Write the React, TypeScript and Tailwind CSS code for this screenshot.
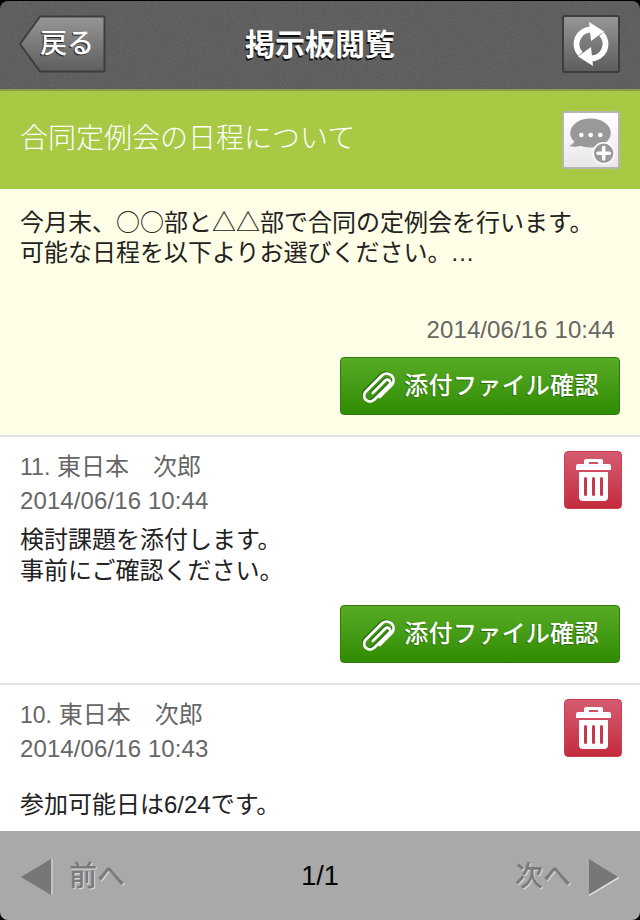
import React from 'react';

const font = { fontFamily: '"Liberation Sans", "Noto Sans CJK JP", sans-serif' };
const cjk = { fontFamily: '"Noto Sans CJK JP", sans-serif' };

function AttachButton() {
  return (
    <button className="w-[280px] h-[58px] rounded-[4px] border border-[#2f7a08] bg-gradient-to-b from-[#58ab24] to-[#2f8c00] flex items-center justify-center gap-[7px] text-white text-[24px] tracking-[0.3px] [text-shadow:-1px_1px_0_#2b6b10]">
      <svg width="36" height="36" viewBox="8.500 12 26 26" fill="none" stroke="#fff" strokeWidth="2" strokeLinecap="round" className="drop-shadow-[-1px_-1px_0_#2b6b10]">
        <path d="M17 30L26 21a2.100 2.100 0 0 1 3 3L18 35a4.200 4.200 0 0 1-6-6L24 17a5 5 0 0 1 7 7L22 33" />
      </svg>
      <span className="font-medium">添付ファイル確認</span>
    </button>
  );
}

function TrashButton() {
  return (
    <button className="w-[58px] h-[58px] rounded-[4px] bg-gradient-to-b from-[#d45a70] to-[#c52a3e] border border-[#c9404f] flex items-center justify-center shrink-0">
      <svg width="35" height="42" viewBox="0 0 35 42">
        <path fill="#fff" fillRule="evenodd" d="M10 0h15a2 2 0 0 1 2 2v3h6a2 2 0 0 1 2 2v4H0V7a2 2 0 0 1 2-2h6V2a2 2 0 0 1 2-2zm3 3v2h9V3z" />
        <path fill="#fff" d="M3 13h29v25a4 4 0 0 1-4 4H7a4 4 0 0 1-4-4z" />
        <rect x="8" y="18" width="3" height="19" rx="1.500" fill="#c9394e" />
        <rect x="16" y="18" width="3" height="19" rx="1.500" fill="#c9394e" />
        <rect x="24" y="18" width="3" height="19" rx="1.500" fill="#c9394e" />
      </svg>
    </button>
  );
}

function Reply({ no, date, lines, attach, gap }: { no: string; date: string; lines: string[]; attach?: boolean; gap: string }) {
  return (
    <div className="relative px-5 pt-[14px] pb-[20px] bg-white">
      <div className="absolute right-[18px] top-[14px]"><TrashButton /></div>
      <div className="text-[#666] text-[24px] leading-[32px] h-[32px]">
        <span className="text-[23px]">{no}</span> 東日本　次郎
      </div>
      <div className="text-[#666] text-[24px] tracking-[0.1px] leading-[36px] h-[36px]">{date}</div>
      <div className={`text-[#222] text-[24px] leading-[31px] ${gap}`}>
        {lines.map((l) => <div key={l}>{l}</div>)}
      </div>
      {attach && <div className="flex justify-end mt-[19px]"><AttachButton /></div>}
    </div>
  );
}

export default function App() {
  return (
    <div style={font} className="w-[640px] h-[920px] bg-black flex flex-col overflow-hidden">
      {/* header */}
      <div className="relative h-[90px] mt-px shrink-0 rounded-t-[8px] bg-[#565656] border-b-2 border-[#8d9a4a] flex items-center justify-between pl-[18px] pr-[20px] overflow-hidden">
        <svg className="absolute inset-0 w-full h-full opacity-20 pointer-events-none">
          <filter id="grain"><feTurbulence type="fractalNoise" baseFrequency="0.9" numOctaves="2" /><feColorMatrix type="saturate" values="0" /></filter>
          <rect width="100%" height="100%" filter="url(#grain)" />
        </svg>
        <div className="relative w-[88px] h-[58px] flex items-center justify-end pr-[12px] -mt-[2px] text-white text-[27px] font-medium [text-shadow:-1px_1px_0_#222]">
          <svg className="absolute inset-0" width="88" height="58" viewBox="0 0 88 58">
            <defs>
              <linearGradient id="backFill" x1="0" y1="0" x2="0" y2="1">
                <stop offset="0" stopColor="#969696" />
                <stop offset="1" stopColor="#5e5e5e" />
              </linearGradient>
            </defs>
            <path d="M22 1.500H85a1.500 1.500 0 0 1 1.500 1.500V55a1.500 1.500 0 0 1-1.500 1.500H22L2 29z" fill="url(#backFill)" stroke="#3d3d3d" strokeWidth="2" strokeLinejoin="round" />
          </svg>
          <span className="relative">戻る</span>
        </div>
        <div className="absolute left-0 right-0 text-center text-white font-bold text-[30px] [text-shadow:-1px_2px_0_#111] -mt-[2px]">掲示板閲覧</div>
        <div className="relative w-[58px] h-[58px] -mt-[2px] rounded-[3px] border-2 border-[#3d3d3d] bg-gradient-to-b from-[#969696] to-[#5e5e5e] flex items-center justify-center">
          <svg width="44" height="48" viewBox="-22 -24 44 48">
            <path fill="none" stroke="#fff" strokeWidth="6" d="M0 -14.500A14.500 14.500 0 0 0 -10.500 10" />
            <path fill="#fff" d="M-2 -22L13 -12.500 0 -3z" />
            <path fill="none" stroke="#fff" strokeWidth="6" d="M0 14.500A14.500 14.500 0 0 0 10.500 -10" />
            <path fill="#fff" d="M2 22L-13 12.500 0 3z" />
          </svg>
        </div>
      </div>

      {/* title */}
      <div className="h-[98px] shrink-0 bg-[#a8c944] flex items-center justify-between pl-5 pr-[20px] text-white text-[28px]">
        <span className="-mt-[2px] font-light">合同定例会の日程について</span>
        <div className="w-[58px] h-[58px] rounded-[3px] border-2 border-[#b5b5b5] bg-gradient-to-b from-white to-[#e8e8e8]">
          <svg width="54" height="54" viewBox="2 2 54 54">
            <ellipse cx="28.500" cy="22" rx="20.300" ry="14.500" fill="#999" />
            <path fill="#999" d="M7 35c3-1 5-3 6-6l8 5c-4 2-9 2-14 1z" />
            <circle cx="19.300" cy="24" r="2.300" fill="#fff" />
            <circle cx="28.700" cy="24" r="2.300" fill="#fff" />
            <circle cx="38.300" cy="24" r="2.300" fill="#fff" />
            <circle cx="41.700" cy="42.300" r="10.500" fill="#999" stroke="#fff" strokeWidth="1.500" />
            <path stroke="#fff" strokeWidth="3.600" strokeLinecap="round" d="M36 42.300h11.400M41.700 36.600v11.400" />
          </svg>
        </div>
      </div>

      {/* message body */}
      <div className="flex-1 min-h-0 overflow-hidden">
        <div className="h-[246px] bg-[#fffee6] px-5 pt-[16px] flex flex-col">
          <div className="text-[#222] text-[24px] leading-[32px] h-[96px]">
            <div style={cjk}>今月末、○○部と△△部で合同の定例会を行います。</div>
            <div>可能な日程を以下よりお選びください。<span className="tracking-[1px]">...</span></div>
          </div>
          <div className="text-[#666] text-[24px] tracking-[0.1px] leading-[36px] text-right pr-[5px] mt-[11px]">2014/06/16 10:44</div>
          <div className="flex justify-end mt-[9px]"><AttachButton /></div>
        </div>
        <div className="h-[2px] bg-[#e2e2e2]" />
        <Reply no="11." date="2014/06/16 10:44" lines={['検討課題を添付します。', '事前にご確認ください。']} attach gap="mt-[5px]" />
        <div className="h-[2px] bg-[#e2e2e2]" />
        <Reply no="10." date="2014/06/16 10:43" lines={['参加可能日は6/24です。']} gap="mt-[22px]" />
      </div>

      {/* pager */}
      <div className="h-[89px] shrink-0 rounded-b-[8px] bg-[#a9a9a9] flex items-center justify-between px-[20px] pt-[2px]">
        <div className="flex items-center gap-[16px] w-[200px]">
          <svg width="33" height="38" viewBox="0 0 33 38"><path d="M31 1v36L1 19z" fill="#777" /><path d="M32 1v36" stroke="#ddd" strokeWidth="1" /></svg>
          <span className="font-medium text-[28px] text-[#7a7a7a] [text-shadow:1px_1px_0_#ddd]">前へ</span>
        </div>
        <div className="text-[27px] text-black">1/1</div>
        <div className="flex items-center justify-end gap-[16px] w-[200px]">
          <span className="font-medium text-[28px] text-[#7a7a7a] [text-shadow:1px_1px_0_#ddd]">次へ</span>
          <svg width="33" height="38" viewBox="0 0 33 38"><path d="M2 1v36l29-18z" fill="#777" /><path d="M2 37.500l30-18" stroke="#ddd" strokeWidth="1.500" /></svg>
        </div>
      </div>
    </div>
  );
}
